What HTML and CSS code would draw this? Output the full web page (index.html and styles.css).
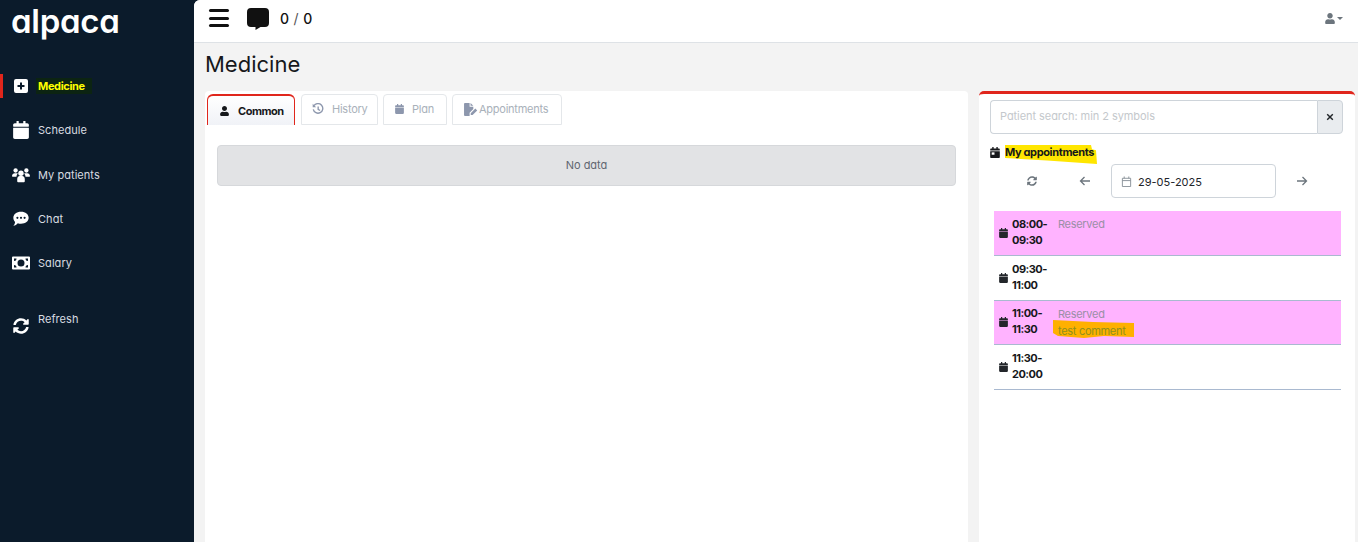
FILE: index.html
```html
<!DOCTYPE html>
<html lang="en">
<head>
<meta charset="utf-8">
<title>Medicine</title>
<link rel="stylesheet" href="styles.css">
</head>
<body>
<svg class="defs" aria-hidden="true">
  <symbol id="cal" viewBox="0 0 448 512"><path d="M12 192h424c6.600 0 12 5.400 12 12v260c0 26.500-21.500 48-48 48H48c-26.500 0-48-21.500-48-48V204c0-6.600 5.400-12 12-12zm436-44v-36c0-26.500-21.500-48-48-48h-48V12c0-6.600-5.400-12-12-12h-40c-6.600 0-12 5.400-12 12v52H160V12c0-6.600-5.400-12-12-12h-40c-6.600 0-12 5.400-12 12v52H48C21.500 64 0 85.500 0 112v36c0 6.600 5.400 12 12 12h424c6.600 0 12-5.400 12-12z"/></symbol>
  <symbol id="user" viewBox="0 0 448 512"><path d="M224 256c70.700 0 128-57.300 128-128S294.700 0 224 0 96 57.300 96 128s57.300 128 128 128zm89.600 32h-16.700c-22.200 10.200-46.900 16-72.900 16s-50.600-5.800-72.900-16h-16.700C60.200 288 0 348.200 0 422.400V464c0 26.500 21.500 48 48 48h352c26.500 0 48-21.500 48-48v-41.600c0-74.200-60.200-134.400-134.400-134.400z"/></symbol>
  <symbol id="sync" viewBox="0 0 512 512"><path d="M370.720 133.280C339.458 104.008 298.888 87.962 255.848 88c-77.458.068-144.328 53.178-162.791 126.850-1.344 5.363-6.122 9.150-11.651 9.150H24.103c-7.498 0-13.194-6.807-11.807-14.176C33.933 94.924 134.813 8 256 8c66.448 0 126.791 26.136 171.315 68.685L463.030 40.970C478.149 25.851 504 36.559 504 57.941V192c0 13.255-10.745 24-24 24H345.941c-21.382 0-32.090-25.851-16.971-40.971l41.750-41.749zM32 296h134.059c21.382 0 32.090 25.851 16.971 40.971l-41.750 41.750c31.262 29.273 71.835 45.319 114.876 45.280 77.418-.07 144.315-53.144 162.787-126.849 1.344-5.363 6.122-9.150 11.651-9.150h57.304c7.498 0 13.194 6.807 11.807 14.176C478.067 417.076 377.187 504 256 504c-66.448 0-126.791-26.136-171.315-68.685L48.970 471.030C33.851 486.149 8 475.441 8 454.059V320c0-13.255 10.745-24 24-24z"/></symbol>
</svg>

<div class="app">
  <aside class="sidebar">
    <div class="logo">alpaca</div>
    <nav class="nav">
      <a class="nav-item active">
        <svg class="nav-icon" viewBox="0 0 14 14"><path fill="#fff" fill-rule="evenodd" d="M2 0h10a2 2 0 0 1 2 2v10a2 2 0 0 1-2 2H2a2 2 0 0 1-2-2V2a2 2 0 0 1 2-2zm4 3.500v2.500H3.500v2H6v2.500h2V8h2.500V6H8V3.500z"/></svg>
        <span class="nav-mark">Medicine</span>
      </a>
      <a class="nav-item">
        <svg class="nav-icon"><use href="#cal"/></svg>
        <span>Schedule</span>
      </a>
      <a class="nav-item">
        <svg class="nav-icon wide" viewBox="0 0 20 16"><g fill="#fff"><circle cx="4" cy="3" r="2.400"/><circle cx="16" cy="3" r="2.400"/><circle cx="10" cy="6" r="3"/><path d="M0 9.500C0 7.300 1.500 6 3 6h2.200c.6 0 1 .2 1.300.5-1 .8-1.500 2-1.500 3.500H.8C.3 10 0 9.800 0 9.500zM20 9.500C20 7.300 18.500 6 17 6h-2.200c-.6 0-1 .2-1.300.5 1 .8 1.500 2 1.500 3.500h4.200c.5 0 .8-.2.800-.5zM5.800 12.500c0-2 1.400-3.300 2.800-3.300h2.800c1.400 0 2.800 1.300 2.800 3.300V15a1 1 0 0 1-1 1H6.800a1 1 0 0 1-1-1z"/></g></svg>
        <span>My patients</span>
      </a>
      <a class="nav-item">
        <svg class="nav-icon wide" viewBox="0 0 20 16"><path fill="#fff" fill-rule="evenodd" d="M10 0c5 0 8.500 2.900 8.500 6.700S15 13.300 10 13.300c-1.300 0-2.500-.2-3.500-.6C5.500 13.800 3.500 15.500 1.500 15.500c1-1 1.800-2.600 1.900-4.300C2.200 10 1.500 8.500 1.500 6.700 1.500 2.900 5 0 10 0zM6 5.500a1.200 1.200 0 1 0 0 2.400 1.200 1.200 0 0 0 0-2.400zm4 0a1.200 1.200 0 1 0 0 2.400 1.200 1.200 0 0 0 0-2.400zm4 0a1.200 1.200 0 1 0 0 2.400 1.200 1.200 0 0 0 0-2.400z"/></svg>
        <span>Chat</span>
      </a>
      <a class="nav-item">
        <svg class="nav-icon wide" viewBox="0 0 18 13"><path fill="#fff" fill-rule="evenodd" d="M1 0h16a1 1 0 0 1 1 1v11a1 1 0 0 1-1 1H1a1 1 0 0 1-1-1V1a1 1 0 0 1 1-1zm8 3a3.500 3.500 0 1 0 0 7 3.500 3.500 0 0 0 0-7zM2 2v2.500A2.500 2.500 0 0 0 4.500 2zm11.500 0A2.500 2.500 0 0 0 16 4.500V2zM2 8.500V11h2.500A2.500 2.500 0 0 0 2 8.500zm14 0A2.500 2.500 0 0 0 13.500 11H16z"/></svg>
        <span>Salary</span>
      </a>
      <a class="nav-item refresh">
        <svg class="nav-icon"><use href="#sync"/></svg>
        <span>Refresh</span>
      </a>
    </nav>
  </aside>

  <div class="main">
    <header class="topbar">
      <button class="burger" aria-label="Menu"><i></i><i></i><i></i></button>
      <svg class="bubble" viewBox="0 0 22 22"><path d="M4 0h14a4 4 0 0 1 4 4v11a4 4 0 0 1-4 4h-4.500L8.500 22v-3H4a4 4 0 0 1-4-4V4a4 4 0 0 1 4-4z"/></svg>
      <span class="count">0 <em>/</em> 0</span>
      <div class="account">
        <svg class="account-icon"><use href="#user"/></svg>
        <i class="caret"></i>
      </div>
    </header>

    <h1 class="page-title">Medicine</h1>

    <div class="columns">
      <section class="panel-left">
        <div class="tabs">
          <a class="tab current"><svg class="tab-icon"><use href="#user"/></svg>Common</a>
          <a class="tab history">
            <svg class="tab-icon hist" viewBox="0 0 14 14"><path fill="none" stroke="currentColor" stroke-width="1.600" d="M2.300 3.200A5.600 5.600 0 1 1 1.500 7.500M7.200 4v3.300l2.200 1.400"/><path fill="currentColor" d="M.8 1v4h4z"/></svg>History</a>
          <a class="tab plan"><svg class="tab-icon"><use href="#cal"/></svg>Plan</a>
          <a class="tab appts">
            <svg class="tab-icon file" viewBox="0 0 15 14"><path fill="currentColor" d="M0 1a1 1 0 0 1 1-1h5v4h4v2.500L6 10.500V14H1a1 1 0 0 1-1-1zM7 0l3 3H7zM7.200 11l5-5 2 2-5 5H7.200z"/></svg>Appointments</a>
        </div>
        <div class="alert">No data</div>
      </section>

      <section class="panel-right">
        <div class="search">
          <div class="search-input">Patient search: min 2 symbols</div>
          <div class="search-clear">
            <svg viewBox="0 0 10 10"><path d="M1.500 1.500l7 7M8.500 1.500l-7 7" stroke="#212529" stroke-width="1.800" fill="none"/></svg>
          </div>
        </div>
        <div class="appts-title">
          <svg class="title-icon" viewBox="0 0 448 512"><path d="M12 192h424c6.600 0 12 5.400 12 12v260c0 26.500-21.500 48-48 48H48c-26.500 0-48-21.500-48-48V204c0-6.600 5.400-12 12-12zm436-44v-36c0-26.500-21.500-48-48-48h-48V12c0-6.600-5.400-12-12-12h-40c-6.600 0-12 5.400-12 12v52H160V12c0-6.600-5.400-12-12-12h-40c-6.600 0-12 5.400-12 12v52H48C21.500 64 0 85.500 0 112v36c0 6.600 5.400 12 12 12h424c6.600 0 12-5.400 12-12z"/><rect x="70" y="250" width="130" height="110" fill="#fff"/></svg>
          <span class="title-text">
            <svg class="scribble" viewBox="0 0 94 22" preserveAspectRatio="none"><path fill="#ffe600" d="M1 0h86l1 5 4 1 1 16-50-4L1 15z"/></svg>
            <b>My appointments</b>
          </span>
        </div>
        <div class="date-row">
          <svg class="date-sync"><use href="#sync"/></svg>
          <svg class="arrow" viewBox="0 0 12 10"><path d="M11 5H1.500M5.500 1l-4 4 4 4" fill="none" stroke="currentColor" stroke-width="1.300"/></svg>
          <div class="date-input">
            <svg class="date-cal" viewBox="0 0 12 12"><path fill="none" stroke="#868e96" d="M1.500 2.500h9v9h-9zM1.500 5h9M3.500 .5v2M8.500 .5v2"/></svg>
            <span>29-05-2025</span>
          </div>
          <svg class="arrow" viewBox="0 0 12 10"><path d="M1 5h9.500M6.500 1l4 4-4 4" fill="none" stroke="currentColor" stroke-width="1.300"/></svg>
        </div>
        <div class="slots">
          <div class="slot busy">
            <svg class="slot-icon"><use href="#cal"/></svg>
            <div class="slot-time">08:00-<br>09:30</div>
            <div class="slot-info">Reserved</div>
          </div>
          <div class="slot">
            <svg class="slot-icon"><use href="#cal"/></svg>
            <div class="slot-time">09:30-<br>11:00</div>
          </div>
          <div class="slot busy">
            <svg class="slot-icon"><use href="#cal"/></svg>
            <div class="slot-time">11:00-<br>11:30</div>
            <div class="slot-info">Reserved<br>
              <span class="comment">
                <svg class="scribble" viewBox="0 0 81 18" preserveAspectRatio="none"><path fill="#ffb000" d="M0 0l40 2 41 1v14l-30-1-20 2-26-2-5-3z"/></svg>
                <span class="comment-text">test comment</span>
              </span>
            </div>
          </div>
          <div class="slot">
            <svg class="slot-icon"><use href="#cal"/></svg>
            <div class="slot-time">11:30-<br>20:00</div>
          </div>
        </div>
      </section>
    </div>
  </div>
</div>
</body>
</html>
```

FILE: styles.css
```css
* { box-sizing: border-box; }
html, body { margin: 0; height: 100%; overflow: hidden; }
body {
  font-family: Inter, "Liberation Sans", sans-serif;
  font-feature-settings: "cv11" 1;
  font-size: 11px;
  color: #212529;
  background: #0b1b2b;
}
.defs { display: none; }
svg { display: block; flex: none; }
.app { display: flex; height: 542px; }

/* sidebar */
.sidebar { width: 194px; flex: none; background: #0b1b2b; color: #d8dce0; }
.logo {
  height: 64px;
  padding: 3px 0 0 11px;
  font-size: 33px;
  line-height: 36px;
  font-weight: 600;
  color: #fff;
  letter-spacing: -.3px;
}
.nav { display: flex; flex-direction: column; }
.nav-item {
  height: 44.3px;
  display: flex;
  align-items: center;
  gap: 8px;
  padding: 0 0 0 12px;
  position: relative;
  letter-spacing: .05px;
}
.nav-item span { position: relative; top: 0; }
.nav-icon { width: 18px; height: 18px; fill: #fff; }
.nav-icon.wide { width: 18px; height: 16px; }
.active { font-weight: 700; }
.active::before {
  content: "";
  position: absolute;
  left: 0; top: 10px;
  width: 3px; height: 24px;
  background: #e0261c;
}
.active .nav-icon { width: 14px; height: 14px; margin: 0 2px 0 2px; }
.nav-mark { color: #ffff00; background: #0c2412; padding: 1px 7px 1px 2px; margin-left: -2px; letter-spacing: -.35px; }
.refresh { margin-top: 17px; }
.refresh span { top: -6px; }
.refresh .nav-icon { height: 16px; position: relative; top: 1px; }

/* main */
.main {
  flex: 1;
  min-width: 0;
  display: flex;
  flex-direction: column;
  background: #f3f3f3;
  border-top-left-radius: 6px;
  overflow: hidden;
}
.topbar {
  height: 43px;
  flex: none;
  display: flex;
  align-items: center;
  background: #fff;
  border-bottom: 1px solid #dee2e6;
  padding: 0 15px 6px 15px;
}
.burger {
  display: flex;
  flex-direction: column;
  gap: 4.5px;
  width: 20px;
  padding: 0;
  border: 0;
  background: none;
}
.burger i { display: block; height: 3px; border-radius: 2px; background: #111; }
.bubble { width: 22px; height: 22px; fill: #111; margin: 2px 0 0 18px; }
.count { margin-left: 11px; font-size: 14px; letter-spacing: .4px; font-weight: 500; color: #111; }
.count em { font-style: normal; font-weight: 400; color: #555; }
.account { margin-left: auto; display: flex; align-items: center; gap: 2px; color: #6c757d; }
.account-icon { width: 10px; height: 11px; fill: #6c757d; }
.caret { width: 0; height: 0; border: 3px solid transparent; border-top-color: #6c757d; border-bottom: 0; }

.page-title {
  margin: 0;
  height: 48px;
  flex: none;
  padding: 6px 0 0 11px;
  font-size: 22px;
  line-height: 30px;
  font-weight: 400;
  color: #16181b;
}

.columns { flex: 1; min-height: 0; display: flex; gap: 11px; padding: 0 3px 0 11px; }

/* left */
.panel-left { width: 763px; flex: none; background: #fff; border-radius: 4px 4px 0 0; padding: 3px 2px 0 2px; }
.tabs { display: flex; gap: 5px; height: 31px; }
.tab {
  display: flex;
  align-items: center;
  gap: 8px;
  padding: 0 12px 1px;
  border: 1px solid #e4e7ea;
  border-radius: 4px 4px 0 0;
  color: #a9b1ba;
  font-size: 11px;
  white-space: nowrap;
  letter-spacing: -.25px;
}
.tab.current {
  width: 88px;
  padding-bottom: 0;
  gap: 9px;
  border: 0;
  border-top: 2px solid #e0261c;
  border-left: 1px solid #e0261c;
  border-right: 1px solid #e0261c;
  border-radius: 6px 6px 0 0;
  background: linear-gradient(#fff, #f0f2f7);
  color: #16181b;
  font-weight: 700;
  letter-spacing: -.5px;
}
.tab.current + .tab { margin-left: 1px; }
.history { width: 77px; padding-left: 10px; }
.plan { width: 64px; padding-left: 11px; gap: 8px; }
.appts { width: 110px; padding-left: 11px; gap: 1px; }
.tab-icon { width: 9px; height: 10px; fill: currentColor; color: #8d97ad; }
.current .tab-icon { color: #16181b; }
.hist { width: 12px; height: 12px; margin-top: -1px; }
.plan .tab-icon { margin-top: -1px; }
.file { width: 14px; height: 13px; }
.alert {
  margin: 20px 10px 0;
  height: 41px;
  display: flex;
  align-items: center;
  justify-content: center;
  padding-bottom: 1px;
  background: #e2e3e5;
  border: 1px solid #d6d8db;
  border-radius: 4px;
  color: #5f6670;
  font-size: 11px;
}

/* right */
.panel-right {
  flex: 1;
  min-width: 0;
  background: #fff;
  border-top: 3px solid #e0261c;
  border-radius: 5px 5px 0 0;
  padding: 6px 12px 0 11px;
}
.search { display: flex; height: 34px; }
.search-input {
  flex: 1;
  display: flex;
  align-items: center;
  padding: 0 0 2px 9px;
  border: 1px solid #ced4da;
  border-right: 0;
  border-radius: 4px 0 0 4px;
  color: #c4c8cc;
  font-size: 11px;
  letter-spacing: -.06px;
}
.search-clear {
  width: 26px;
  display: flex;
  align-items: center;
  justify-content: center;
  background: #e9ecef;
  border: 1px solid #ced4da;
  border-radius: 0 4px 4px 0;
}
.search-clear svg { width: 8px; height: 8px; }
.appts-title { display: flex; align-items: center; gap: 5px; height: 16px; margin-top: 10px; }
.title-icon { width: 10px; height: 11px; fill: #16181b; margin-top: 1px; }
.title-text { position: relative; }
.title-text b { position: relative; font-size: 11px; font-weight: 700; color: #16181b; letter-spacing: -.36px; }
.scribble { position: absolute; left: -1px; top: 0; width: 94px; height: 19px; }
.date-row { display: flex; align-items: center; height: 34px; margin-top: 4px; color: #6c757d; }
.date-sync { width: 10px; height: 10px; fill: #6c757d; margin-left: 37px; }
.arrow { width: 12px; height: 10px; }
.date-row .arrow:nth-of-type(2) { margin-left: 42px; }
.date-row .arrow:last-child { margin-left: 20px; }
.date-input {
  width: 165px;
  height: 34px;
  margin-left: 20px;
  display: flex;
  align-items: center;
  gap: 6px;
  padding: 1px 0 0 9px;
  border: 1px solid #ced4da;
  border-radius: 4px;
  color: #212529;
  font-size: 11px;
}
.date-cal { width: 11px; height: 11px; }
.slots { margin: 13px 0 0 4px; width: 347px; }
.slot {
  height: 44.800px;
  display: flex;
  align-items: center;
  padding-left: 5px;
  border-bottom: 1px solid #a9b9d0;
  background: #fff;
}
.busy { background: #ffb3ff; }
.slot-icon { width: 9px; height: 10px; fill: #23262b; margin: 0 4px 0 0; }
.slot-time { width: 46px; margin-top: -2px; font-size: 11px; line-height: 16px; font-weight: 700; color: #16181b; letter-spacing: -.5px; }
.slot-info { align-self: flex-start; margin-top: 5px; font-size: 11px; line-height: 17px; color: #9a8fa6; letter-spacing: -.3px; }
.comment { position: relative; display: inline-block; }
.comment .scribble { left: -5px; top: -3px; width: 81px; height: 18px; }
.comment-text { position: relative; color: #8f8f1e; }
```
